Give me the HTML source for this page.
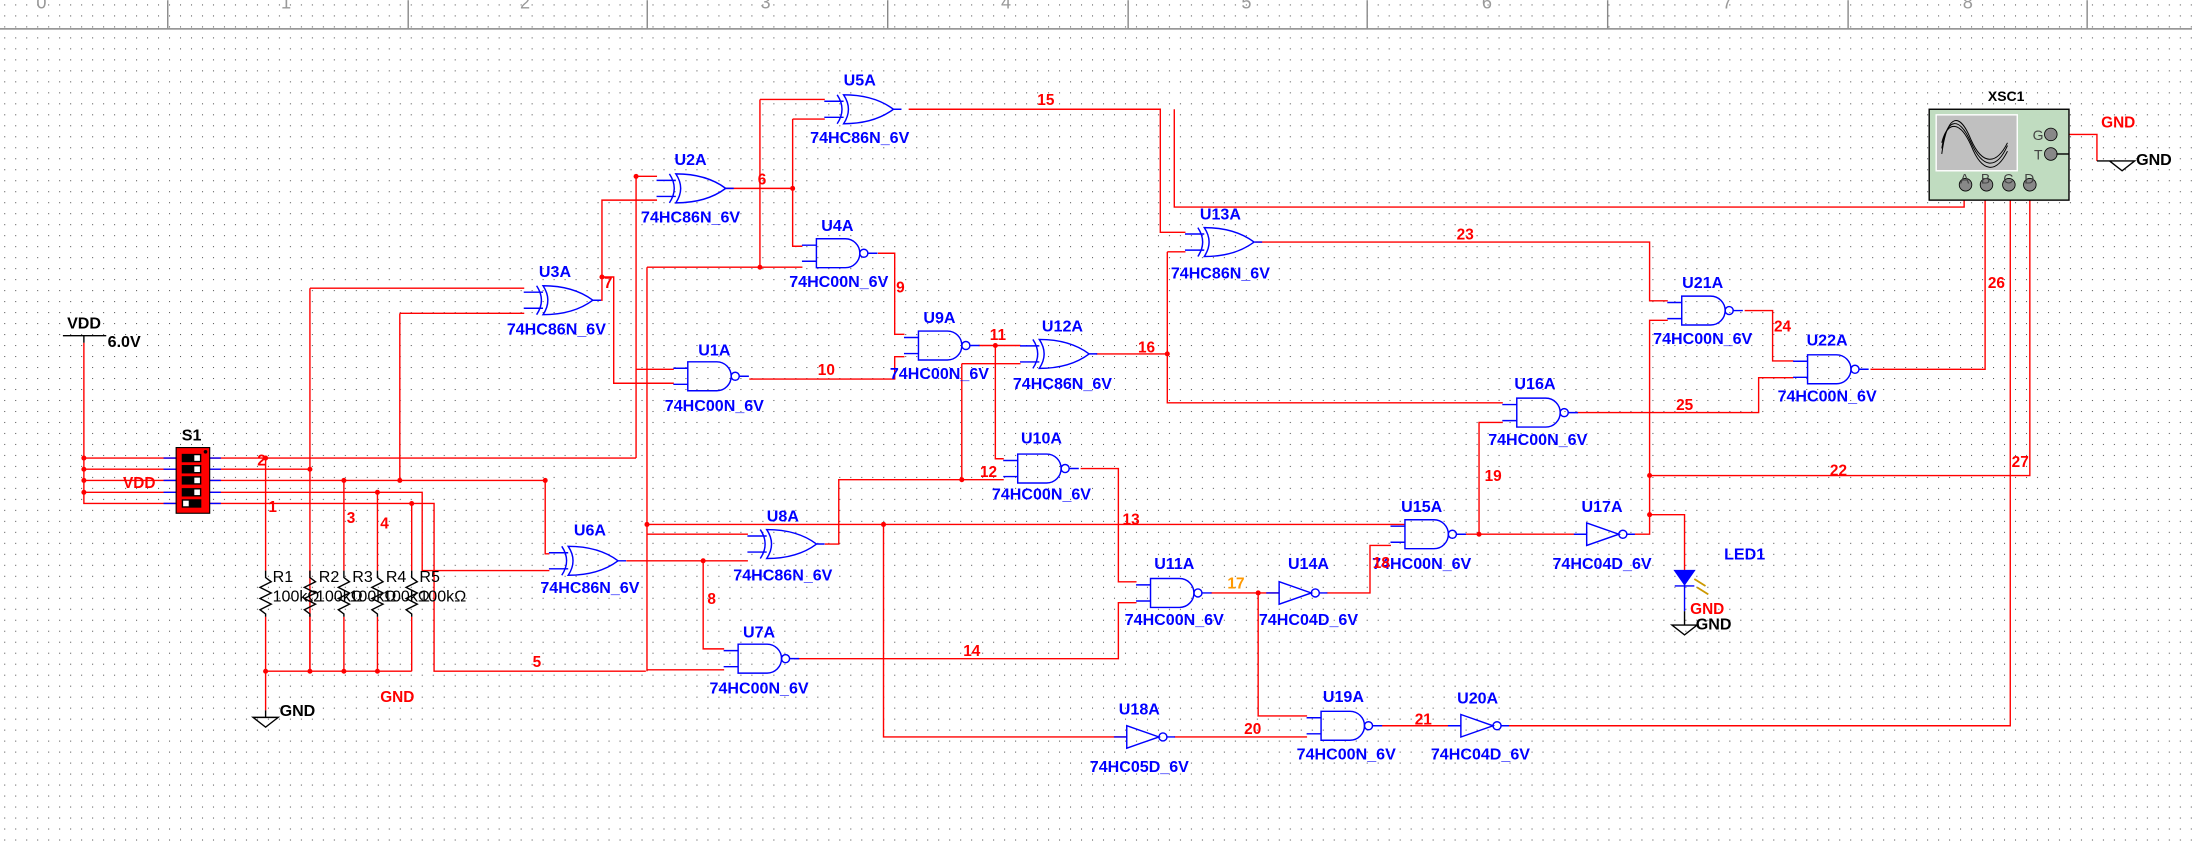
<!DOCTYPE html>
<html><head><meta charset="utf-8"><style>
html,body{margin:0;padding:0;background:#fff;}
svg{display:block;}
text{font-family:"Liberation Sans",sans-serif;}
.w{stroke:#f00;stroke-width:1;fill:none;}
.g{stroke:#00f;stroke-width:0.9;fill:none;}
.lb{fill:#00f;font-size:11.5px;font-weight:bold;}
.nt{fill:#f00;font-size:11px;font-weight:bold;}
.bk{fill:#000;font-size:11.5px;font-weight:bold;}
</style></head><body>
<svg width="2192" height="842" viewBox="0 0 1568 602" xmlns="http://www.w3.org/2000/svg">
<defs>
<pattern id="dots" x="3" y="3" width="7.86" height="7.86" patternUnits="userSpaceOnUse">
<rect x="0" y="0" width="0.75" height="0.75" fill="#555"/></pattern>
<g id="nand"><g transform="scale(1.15)"><path class="g" d="M0,-9H18A9,9 0 0 1 18,9H0Z M-9,-5H0 M-9,5H0 M32,0H38"/><circle class="g" cx="29.5" cy="0" r="2.5"/></g></g>
<g id="xor"><g transform="scale(1.15)"><path class="g" d="M3,-9Q22,-9 34,0Q22,9 3,9Q9,0 3,-9Z M-1,-9Q5,0 -1,9 M-9,-5H3 M-9,5H3 M34,0H39"/></g></g>
<g id="inv"><g transform="scale(1.15)"><path class="g" d="M0,-7L20,0L0,7Z M-8,0H0 M25,0H30"/><circle class="g" cx="22.5" cy="0" r="2.5"/></g></g>
</defs>
<rect width="1568" height="602" fill="#fff"/>
<rect y="22" width="1568" height="580" fill="url(#dots)"/>
<rect width="1568" height="20" fill="url(#dots)"/>
<g stroke="#888" stroke-width="1">
<line x1="0" y1="20.5" x2="1568" y2="20.5"/>
<line x1="120" y1="0" x2="120" y2="20"/><line x1="292" y1="0" x2="292" y2="20"/><line x1="463" y1="0" x2="463" y2="20"/><line x1="635" y1="0" x2="635" y2="20"/><line x1="807" y1="0" x2="807" y2="20"/><line x1="978" y1="0" x2="978" y2="20"/><line x1="1150" y1="0" x2="1150" y2="20"/><line x1="1322" y1="0" x2="1322" y2="20"/><line x1="1493" y1="0" x2="1493" y2="20"/>
</g>
<g fill="#999" font-size="13">
<text x="26" y="6">0</text><text x="201" y="6">1</text><text x="372" y="6">2</text><text x="544" y="6">3</text><text x="716" y="6">4</text><text x="888" y="6">5</text><text x="1060" y="6">6</text><text x="1232" y="6">7</text><text x="1404" y="6">8</text>
</g>

<g class="w">
<path d="M60,245V360H126 M60,327.5H126 M60,335.5H126 M60,343.5H126 M60,352H126"/>
<path d="M150,327.5H455 M455,126V327.5 M455,126H470 M455,264H482"/>
<path d="M150,335.5H221.7 M221.7,206V480 M221.7,206H375"/>
<path d="M150,343.5H390 M286,224V343.5 M286,224H375 M246,343.5V408 M390,343.5V396H393"/>
<path d="M150,352H302V408H393 M270,352V408"/>
<path d="M150,360H310.5V480H462 M294.5,360V408"/>
<path d="M190,327.5V408 M190,441V480H294.5 M221.7,441V480 M246,441V480 M270,441V480 M294.5,441V480 M190,480V508"/>
<path d="M462.8,191V480 M462.8,191H574 M462.8,375H1005 M462.8,382H535 M462.8,479H518"/>
<path d="M424,214.6H430.6V143H470 M430.6,198H439V274H482"/>
<path d="M519,134.6H567 M567,85V176H574 M567,85H590 M543.6,71V191 M543.6,71H590"/>
<path d="M628,181H640V239H647 M536,271H640V255H647"/>
<path d="M700,247H730 M712,247V328H718 M688,260H730 M688,260V343H600V389H590 M688,343H718"/>
<path d="M650,78H830V166H848 M840,78V148H1405V136"/>
<path d="M784,253H835 M835,180V288H1075 M835,180H848"/>
<path d="M898,173H1180V215H1193 M1248,222H1268V258H1283 M1128,295H1258V270H1283 M1338,264H1420V136"/>
<path d="M1165,382H1180V229H1193 M1180,340H1452V136 M1180,368H1205V408"/>
<path d="M1048,382H1135 M1058,382V302H1075 M949,424H980V390H995 M866,424H915 M900,424V512H935"/>
<path d="M773,335H800V416H813 M568,471H800V431H813"/>
<path d="M448,401H535 M503,401V464H518"/>
<path d="M632,375V527H806 M840,527H935 M988,519H1045 M1079,519H1438V136"/>
<path d="M1470,96H1500V115"/>
</g>
<g fill="#f00">
<circle cx="455" cy="126" r="1.8"/><circle cx="430.6" cy="198" r="1.8"/><circle cx="567" cy="134.6" r="1.8"/><circle cx="543.6" cy="191" r="1.8"/>
<circle cx="712" cy="247" r="1.8"/><circle cx="688" cy="343" r="1.8"/><circle cx="632" cy="375" r="1.8"/><circle cx="462.8" cy="375" r="1.8"/>
<circle cx="503" cy="401" r="1.8"/><circle cx="900" cy="424" r="1.8"/><circle cx="1058" cy="382" r="1.8"/><circle cx="1180" cy="368" r="1.8"/><circle cx="1180" cy="340" r="1.8"/>
<circle cx="221.7" cy="335.5" r="1.8"/><circle cx="286" cy="343.5" r="1.8"/><circle cx="390" cy="343.5" r="1.8"/><circle cx="246" cy="343.5" r="1.8"/><circle cx="270" cy="352" r="1.8"/><circle cx="294.5" cy="360" r="1.8"/><circle cx="190" cy="327.5" r="1.8"/>
<circle cx="60" cy="327.5" r="1.8"/><circle cx="60" cy="335.5" r="1.8"/><circle cx="60" cy="343.5" r="1.8"/><circle cx="60" cy="352" r="1.8"/>
<circle cx="190" cy="480" r="1.8"/><circle cx="221.7" cy="480" r="1.8"/><circle cx="246" cy="480" r="1.8"/><circle cx="270" cy="480" r="1.8"/><circle cx="835" cy="253" r="1.8"/>
</g>

<use href="#xor" x="600" y="78"/>
<use href="#xor" x="480" y="134.6"/>
<use href="#nand" x="584" y="181"/>
<use href="#xor" x="385" y="214.6"/>
<use href="#nand" x="492" y="269"/>
<use href="#nand" x="657" y="247"/>
<use href="#xor" x="740" y="253"/>
<use href="#xor" x="858" y="173"/>
<use href="#nand" x="728" y="335"/>
<use href="#xor" x="403" y="401"/>
<use href="#xor" x="545" y="389"/>
<use href="#nand" x="528" y="471"/>
<use href="#nand" x="823" y="424"/>
<use href="#inv" x="915" y="424"/>
<use href="#nand" x="1005" y="382"/>
<use href="#inv" x="1135" y="382"/>
<use href="#nand" x="1085" y="295"/>
<use href="#nand" x="1203" y="222"/>
<use href="#nand" x="1293" y="264"/>
<use href="#inv" x="806" y="527"/>
<use href="#nand" x="945" y="519"/>
<use href="#inv" x="1045" y="519"/>

<g class="lb" text-anchor="middle">
<text x="615" y="61">U5A</text><text x="615" y="102">74HC86N_6V</text>
<text x="494" y="118">U2A</text><text x="494" y="159">74HC86N_6V</text>
<text x="599" y="165">U4A</text><text x="600" y="205">74HC00N_6V</text>
<text x="397" y="198">U3A</text><text x="398" y="239">74HC86N_6V</text>
<text x="511" y="254">U1A</text><text x="511" y="294">74HC00N_6V</text>
<text x="672" y="231">U9A</text><text x="672" y="271">74HC00N_6V</text>
<text x="760" y="237">U12A</text><text x="760" y="278">74HC86N_6V</text>
<text x="873" y="157">U13A</text><text x="873" y="199">74HC86N_6V</text>
<text x="745" y="317">U10A</text><text x="745" y="357">74HC00N_6V</text>
<text x="422" y="383">U6A</text><text x="422" y="424">74HC86N_6V</text>
<text x="560" y="373">U8A</text><text x="560" y="415">74HC86N_6V</text>
<text x="543" y="456">U7A</text><text x="543" y="496">74HC00N_6V</text>
<text x="840" y="407">U11A</text><text x="840" y="447">74HC00N_6V</text>
<text x="936" y="407">U14A</text><text x="936" y="447">74HC04D_6V</text>
<text x="1017" y="366">U15A</text><text x="1017" y="407">74HC00N_6V</text>
<text x="1146" y="366">U17A</text><text x="1146" y="407">74HC04D_6V</text>
<text x="1098" y="278">U16A</text><text x="1100" y="318">74HC00N_6V</text>
<text x="1218" y="206">U21A</text><text x="1218" y="246">74HC00N_6V</text>
<text x="1307" y="247">U22A</text><text x="1307" y="287">74HC00N_6V</text>
<text x="815" y="511">U18A</text><text x="815" y="552">74HC05D_6V</text>
<text x="961" y="502">U19A</text><text x="963" y="543">74HC00N_6V</text>
<text x="1057" y="503">U20A</text><text x="1059" y="543">74HC04D_6V</text>
<text x="1248" y="400">LED1</text>
</g>
<g class="nt">
<text x="742" y="75">15</text><text x="542" y="132">6</text><text x="432" y="206">7</text><text x="641" y="209">9</text>
<text x="585" y="268">10</text><text x="708" y="243">11</text><text x="814" y="252">16</text><text x="701" y="341">12</text>
<text x="1042" y="171">23</text><text x="1269" y="237">24</text><text x="1199" y="293">25</text><text x="1422" y="206">26</text>
<text x="1309" y="340">22</text><text x="1439" y="334">27</text><text x="1062" y="344">19</text><text x="982" y="406">18</text>
<text x="803" y="375">13</text><text x="689" y="469">14</text><text x="506" y="432">8</text><text x="381" y="477">5</text>
<text x="890" y="525">20</text><text x="1012" y="518">21</text>
<text x="184" y="333">2</text><text x="192" y="366">1</text><text x="248" y="374">3</text><text x="272" y="378">4</text>
<text x="88" y="349">VDD</text><text x="272" y="502">GND</text><text x="1503" y="91">GND</text><text x="1209" y="439">GND</text>
</g>
<text x="878" y="421" fill="#f90" font-size="11" font-weight="bold">17</text>

<path d="M45,240H76 M60,240V245" stroke="#000" fill="none"/>
<text class="bk" x="48" y="235">VDD</text>
<text class="bk" x="77" y="248">6.0V</text>
<text class="bk" x="130" y="315">S1</text>
<path d="M117,327.5H126M117,335.5H126M117,343.5H126M117,352H126M117,360H126 M150,327.5H158M150,335.5H158M150,343.5H158M150,352H158M150,360H158" stroke="#00f"/>
<rect x="126" y="320" width="24" height="47" fill="#f00" stroke="#000" stroke-width="0.8"/>
<circle cx="147" cy="323" r="1.3" fill="#000"/>
<g fill="#000"><rect x="130" y="324.5" width="14" height="6"/><rect x="130" y="332.5" width="14" height="6"/><rect x="130" y="340.5" width="14" height="6"/><rect x="130" y="349" width="14" height="6"/><rect x="130" y="357" width="14" height="6"/></g>
<g fill="#fff"><rect x="139" y="325.5" width="4" height="4"/><rect x="139" y="333.5" width="4" height="4"/><rect x="139" y="341.5" width="4" height="4"/><rect x="139" y="350" width="4" height="4"/><rect x="131" y="358" width="4" height="4"/></g>
<g stroke="#000" fill="none">
<path d="M190,408V413l4,3l-8,4l8,4l-8,4l8,4l-8,4l4,3V441"/>
<path d="M221.7,408V413l4,3l-8,4l8,4l-8,4l8,4l-8,4l4,3V441"/>
<path d="M246,408V413l4,3l-8,4l8,4l-8,4l8,4l-8,4l4,3V441"/>
<path d="M270,408V413l4,3l-8,4l8,4l-8,4l8,4l-8,4l4,3V441"/>
<path d="M294.5,408V413l4,3l-8,4l8,4l-8,4l8,4l-8,4l4,3V441"/>
</g>
<g fill="#000" font-size="11.5">
<text x="195" y="416">R1</text><text x="228" y="416">R2</text><text x="252" y="416">R3</text><text x="276" y="416">R4</text><text x="300" y="416">R5</text>
<text x="195" y="430">100kΩ</text><text x="226" y="430">100kΩ</text><text x="250" y="430">100kΩ</text><text x="274" y="430">100kΩ</text><text x="300" y="430">100kΩ</text>
</g>
<g stroke="#000" fill="none"><path d="M181,513H199L190,520Z M190,508V513"/><path d="M1196,447H1214L1205,454Z M1205,437V447"/><path d="M1509,115H1527L1518,122Z M1500,115H1518"/></g>
<text class="bk" x="200" y="512">GND</text>
<text class="bk" x="1213" y="450">GND</text>
<text class="bk" x="1528" y="118">GND</text>
<path d="M1198,408H1212L1205,418Z" fill="#00f" stroke="#00f"/>
<path d="M1198,419H1212 M1205,418V437" stroke="#00f"/>
<path d="M1212,414l8,5 M1214,420l8,5" stroke="#c90" stroke-width="1.3"/>
<text x="1422" y="72" font-family="Liberation Mono,monospace" font-size="10" font-weight="bold">XSC1</text>
<rect x="1380" y="78" width="100" height="65" fill="#c0dcc0" stroke="#000"/>
<rect x="1385" y="82" width="58" height="40" fill="#c0c0c0" stroke="#fff"/>
<g stroke="#000" fill="none" stroke-width="0.7">
<path d="M1389,110C1393,80 1402,80 1410,100C1418,118 1428,118 1436,102"/>
<path d="M1389,106C1393,82 1402,84 1410,102C1418,120 1428,122 1436,104"/>
<path d="M1389,102C1393,86 1402,86 1410,104C1418,124 1428,124 1436,108"/>
</g>
<g fill="#888" stroke="#000" stroke-width="0.6">
<circle cx="1467" cy="96" r="4.5"/><circle cx="1467" cy="110" r="4.5"/>
<circle cx="1406" cy="132" r="4.5"/><circle cx="1421" cy="132" r="4.5"/><circle cx="1437" cy="132" r="4.5"/><circle cx="1452" cy="132" r="4.5"/>
</g>
<path d="M1471,110H1480" stroke="#000"/>
<g fill="#444" font-size="10"><text x="1454" y="100">G</text><text x="1455" y="114">T</text><text x="1402" y="131">A</text><text x="1417" y="131">B</text><text x="1433" y="131">C</text><text x="1448" y="131">D</text></g>
</svg>
</body></html>
